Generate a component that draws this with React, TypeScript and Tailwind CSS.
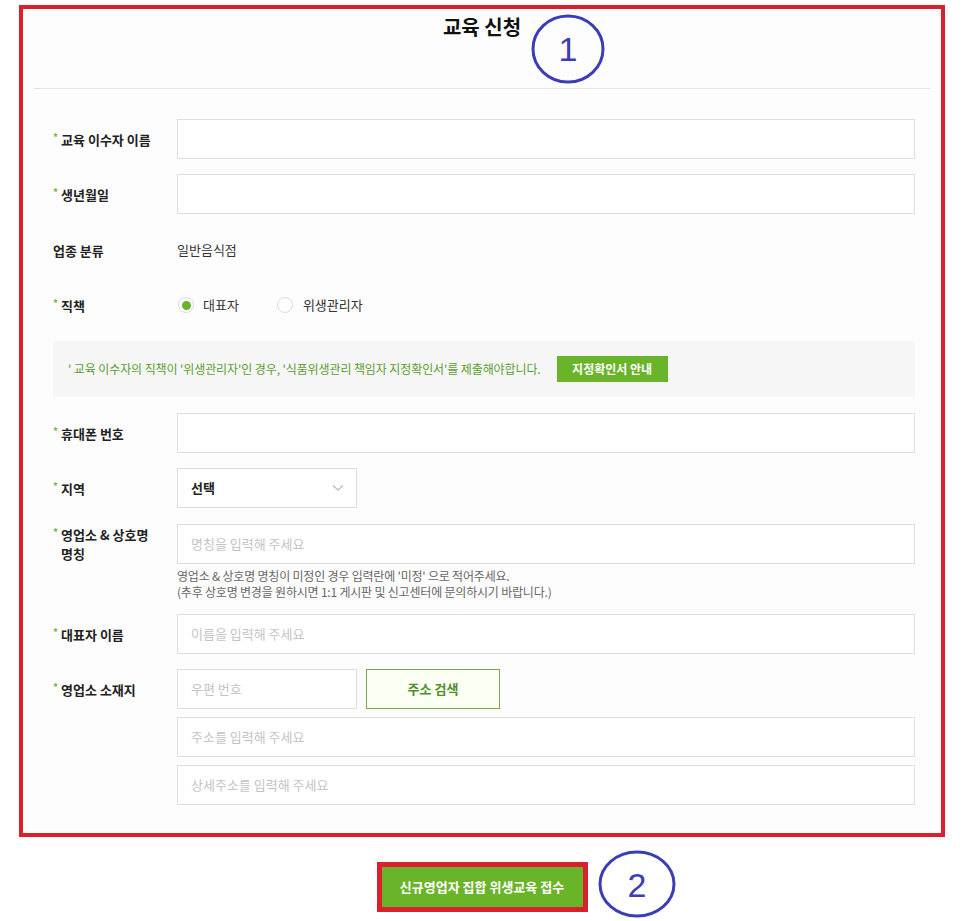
import React from "react";

const font = { fontFamily: '"Noto Sans CJK KR", "Noto Sans", sans-serif' };

function Label({ children, req = true }: { children: React.ReactNode; req?: boolean }) {
  return (
    <div className="w-[124px] shrink-0 flex items-start text-[13px] font-bold text-[#222] leading-[19px]">
      {req && <span className="text-[#7ab648] text-[10px] mr-[3px] leading-[14px]">*</span>}
      <span>{children}</span>
    </div>
  );
}

function Input({ placeholder = "", className = "" }: { placeholder?: string; className?: string }) {
  return (
    <div
      className={`h-[40px] border border-[#dedede] bg-white flex items-center px-[13px] text-[13px] text-[#c4c4c4] ${className}`}
    >
      {placeholder}
    </div>
  );
}

export default function App() {
  return (
    <div className="min-h-[921px] w-[963px] bg-white" style={font}>
      <div className="pt-[5px] pl-[19px]">
        <div className="relative w-[926px] h-[832px] border-[4px] border-[#d9202c] bg-[#fdfdfd]">
          {/* annotation circle 1 */}
          <svg className="absolute left-[505px] top-[2px]" width="80" height="76" viewBox="0 0 80 76">
            <ellipse cx="40" cy="38" rx="35" ry="33" fill="none" stroke="#3a3db5" strokeWidth="3" />
            <text x="40" y="50" textAnchor="middle" fontSize="34" fill="#3a3db5" fontFamily="Liberation Sans, sans-serif">1</text>
          </svg>
          <div className="px-[11px]">
            <div className="h-[80px] border-b border-[#e4e4e4] flex justify-center pt-[3px]">
              <h1 className="text-[20px] font-bold text-[#111] leading-[30px]">교육 신청</h1>
            </div>
            <div className="pl-[19px] pr-[15px] pt-[30px] flex flex-col">
              {/* row 1 */}
              <div className="flex items-center h-[40px]">
                <Label>교육 이수자 이름</Label>
                <Input className="flex-1" />
              </div>
              <div className="flex items-center h-[40px] mt-[15px]">
                <Label>생년월일</Label>
                <Input className="flex-1" />
              </div>
              <div className="flex items-center h-[40px] mt-[16px]">
                <Label req={false}>업종 분류</Label>
                <span className="text-[13px] text-[#333]">일반음식점</span>
              </div>
              <div className="flex items-center h-[40px] mt-[15px]">
                <Label>직책</Label>
                <div className="flex items-center text-[13px] text-[#333]">
                  <span className="ml-[1px] w-[16px] h-[16px] rounded-full border border-[#dcdcdc] bg-white flex items-center justify-center">
                    <span className="w-[9px] h-[9px] rounded-full bg-[#6ab42a]" />
                  </span>
                  <span className="ml-[9px]">대표자</span>
                  <span className="ml-[38px] w-[16px] h-[16px] rounded-full border border-[#dcdcdc] bg-white" />
                  <span className="ml-[10px]">위생관리자</span>
                </div>
              </div>
              {/* notice */}
              <div className="mt-[16px] h-[56px] bg-[#f6f6f6] flex items-center pl-[15px]">
                <span className="text-[12px] text-[#5a9e2f] tracking-[-0.1px]">
                  ' 교육 이수자의 직책이 '위생관리자'인 경우, '식품위생관리 책임자 지정확인서'를 제출해야합니다.
                </span>
                <button className="ml-[16px] w-[111px] h-[26px] bg-[#6ab42a] text-white text-[12px] font-bold">
                  지정확인서 안내
                </button>
              </div>
              <div className="flex items-center h-[40px] mt-[16px]">
                <Label>휴대폰 번호</Label>
                <Input className="flex-1" />
              </div>
              <div className="flex items-center h-[40px] mt-[15px]">
                <Label>지역</Label>
                <div className="w-[180px] h-[40px] border border-[#dedede] bg-white flex items-center justify-between pl-[13px] pr-[12px]">
                  <span className="text-[13px] font-bold text-[#222]">선택</span>
                  <svg width="12" height="8" viewBox="0 0 12 8">
                    <path d="M1 1.5 L6 6 L11 1.5" fill="none" stroke="#b8b8b8" strokeWidth="1.2" />
                  </svg>
                </div>
              </div>
              <div className="flex items-start mt-[16px]">
                <div className="pt-[1px]">
                  <Label>
                    영업소 &amp; 상호명
                    <br />
                    명칭
                  </Label>
                </div>
                <div className="flex-1 flex flex-col">
                  <Input placeholder="명칭을 입력해 주세요" />
                  <div className="mt-[4px] text-[12px] leading-[16px] text-[#666] tracking-[-0.2px]">
                    <div>영업소 &amp; 상호명 명칭이 미정인 경우 입력란에 '미정' 으로 적어주세요.</div>
                    <div>(추후 상호명 변경을 원하시면 1:1 게시판 및 신고센터에 문의하시기 바랍니다.)</div>
                  </div>
                </div>
              </div>
              <div className="flex items-center h-[40px] mt-[14px]">
                <Label>대표자 이름</Label>
                <Input className="flex-1" placeholder="이름을 입력해 주세요" />
              </div>
              <div className="flex items-start mt-[15px]">
                <div className="h-[40px] flex items-center">
                  <Label>영업소 소재지</Label>
                </div>
                <div className="flex-1 flex flex-col gap-[8px]">
                  <div className="flex gap-[9px]">
                    <Input className="w-[180px]" placeholder="우편 번호" />
                    <button className="w-[134px] h-[40px] border border-[#7da94a] bg-[#fbfff4] text-[13px] font-bold text-[#4e8f2a]">
                      주소 검색
                    </button>
                  </div>
                  <Input placeholder="주소를 입력해 주세요" />
                  <Input placeholder="상세주소를 입력해 주세요" />
                </div>
              </div>
            </div>
          </div>
        </div>
      </div>
      {/* submit */}
      <div className="w-[964px] flex justify-center mt-[25px]">
        <div className="relative">
          <button className="w-[211px] h-[50px] border-[5px] border-[#d9202c] bg-[#6ab42a] text-white text-[13px] font-bold">
            신규영업자 집합 위생교육 접수
          </button>
          <svg className="absolute left-[219px] top-[-13px]" width="82" height="70" viewBox="0 0 82 70">
            <ellipse cx="41" cy="35" rx="37" ry="32" fill="none" stroke="#3a3db5" strokeWidth="3" />
            <text x="41" y="48" textAnchor="middle" fontSize="34" fill="#3a3db5" fontFamily="Liberation Sans, sans-serif">2</text>
          </svg>
        </div>
      </div>
    </div>
  );
}
